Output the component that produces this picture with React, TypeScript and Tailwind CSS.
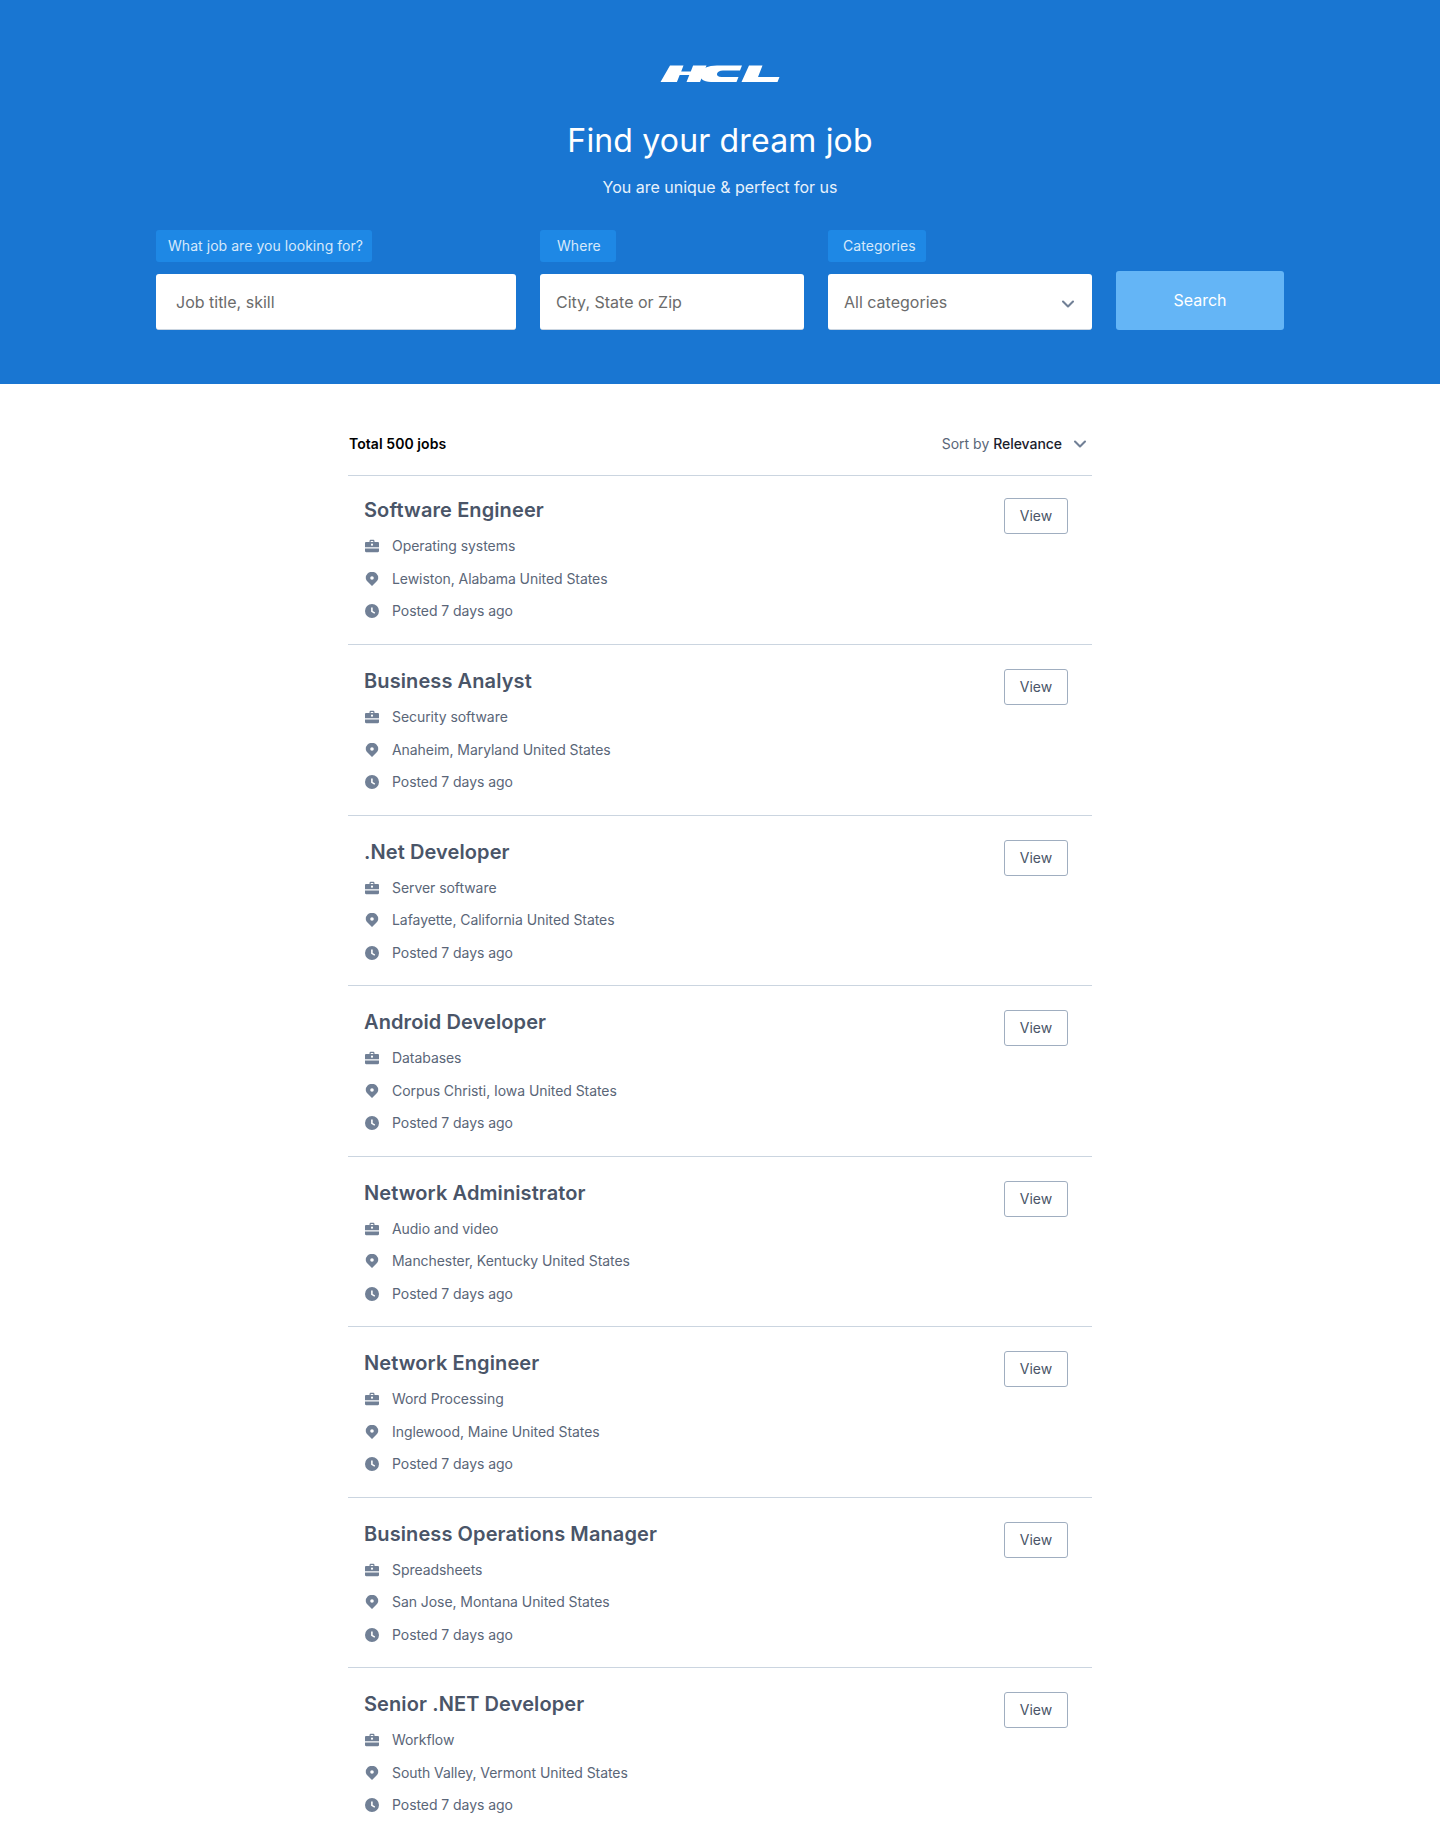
import { ChevronDown } from "lucide-react";

const jobs = [
  { title: "Software Engineer", category: "Operating systems", place: "Lewiston, Alabama United States" },
  { title: "Business Analyst", category: "Security software", place: "Anaheim, Maryland United States" },
  { title: ".Net Developer", category: "Server software", place: "Lafayette, California United States" },
  { title: "Android Developer", category: "Databases", place: "Corpus Christi, Iowa United States" },
  { title: "Network Administrator", category: "Audio and video", place: "Manchester, Kentucky United States" },
  { title: "Network Engineer", category: "Word Processing", place: "Inglewood, Maine United States" },
  { title: "Business Operations Manager", category: "Spreadsheets", place: "San Jose, Montana United States" },
  { title: "Senior .NET Developer", category: "Workflow", place: "South Valley, Vermont United States" },
];

const Logo = () => (
  <svg width="120" height="18" viewBox="0 0 120 18" fill="#fff">
    <path d="M10 .5h13.500l-2.300 6h9.600l2.300-6H46.500L40 17H26.500l2.800-7h-9.600l-2.800 7H.5z" />
    <path d="M57 .5h25l-2 5H63c-3.500 0-5.500 1.300-6 3.300-.4 2 1.200 3.200 4.500 3.200h17l-2 5H51c-8 0-12-3.400-10.500-8.700C42 3.500 48 .5 57 .5z" />
    <path d="M89 .5h13.500L98 12h21.500l-2 5H81.500z" />
  </svg>
);

const BagIcon = () => (
  <svg width="14" height="14" viewBox="0 0 14 14" fill="#718096" className="shrink-0">
    <path
      fillRule="evenodd"
      d="M4.500 2.200C4.500 1.300 5.200.8 6 .8h2c.8 0 1.500.5 1.500 1.400V3H12.800c.7 0 1.200.5 1.200 1.200V8.200H0V4.200C0 3.500.5 3 1.200 3h3.300zm1.200.8h2.600v-.6c0-.2-.1-.4-.4-.4H6.100c-.3 0-.4.2-.4.400zM7 6.800a1.100 1.100 0 1 0 0-2.200 1.100 1.100 0 0 0 0 2.200z"
    />
    <path d="M0 9.400h14V12c0 .7-.5 1.200-1.200 1.200H1.200C.5 13.200 0 12.700 0 12z" />
  </svg>
);

const PinIcon = () => (
  <svg width="14" height="14" viewBox="0 0 14 14" fill="#718096" className="shrink-0">
    <path
      fillRule="evenodd"
      d="M7 14 2.500 9.500C1.400 8.400.8 7.200.8 6a6.200 6.200 0 1 1 12.400 0c0 1.200-.6 2.400-1.700 3.500zM7 7.800a1.800 1.800 0 1 0 0-3.600 1.800 1.800 0 0 0 0 3.600z"
    />
  </svg>
);

const ClockIcon = () => (
  <svg width="14" height="14" viewBox="0 0 14 14" fill="#718096" className="shrink-0">
    <path
      fillRule="evenodd"
      d="M7 14A7 7 0 1 1 7 0a7 7 0 0 1 0 14zm-.9-10.500v4.200l3.300 2 .8-1.300-2.500-1.500V3.500z"
    />
  </svg>
);

const Field = ({ label, width, labelClass, children }: { label: string; width: string; labelClass: string; children: React.ReactNode }) => (
  <div className={`flex flex-col items-start gap-3 ${width}`}>
    <span className={`h-8 flex items-center rounded-[3px] bg-[#1e88e5] text-sm leading-none tracking-[0.05px] text-[#d6e9fb] ${labelClass}`}>{label}</span>
    {children}
  </div>
);

const JobRow = ({ title, category, place }: { title: string; category: string; place: string }) => (
  <div className="h-[170.5px] first:h-[169px] border-t border-[#cbd5e0] pl-4 pr-6 pt-[22px] first:pt-[20px] flex justify-between items-start">
    <div>
      <h2 className="text-xl leading-[28px] font-semibold tracking-[0.1px] text-[#4a5568]">{title}</h2>
      <ul className="mt-[6px] flex flex-col text-sm leading-[32.500px] tracking-[-0.06px] text-[#5a6678]">
        <li className="flex items-center gap-[13px] pl-[1px]"><BagIcon />{category}</li>
        <li className="flex items-center gap-[13px] pl-[1px]"><PinIcon />{place}</li>
        <li className="flex items-center gap-[13px] pl-[1px]"><ClockIcon />Posted 7 days ago</li>
      </ul>
    </div>
    <button className="mt-[2px] h-9 w-16 rounded-[3px] border border-[#a0aec0] bg-white text-sm text-[#4a5568]">View</button>
  </div>
);

export default function App() {
  return (
    <div className="h-[1829px] overflow-hidden bg-white font-['Inter',sans-serif]">
      <header className="h-[384px] bg-[#1976d2] pt-[65px] flex flex-col items-center">
        <Logo />
        <h1 className="mt-[38px] text-[32px] leading-[40px] tracking-[0.16px] text-white">Find your dream job</h1>
        <p className="mt-[14px] text-base leading-6 text-[#e8f2fc]">You are unique &amp; perfect for us</p>
        <div className="mt-[31px] flex items-end gap-6">
          <Field label="What job are you looking for?" width="w-[360px]" labelClass="pl-3 pr-[9px]">
            <input placeholder="Job title, skill" className="h-[56px] w-full rounded-[3px] border-b border-[#cbd5e0] bg-white px-5 text-base text-[#555] outline-none placeholder:text-[#6b6b6b]" />
          </Field>
          <Field label="Where" width="w-[264px]" labelClass="pl-[17px] pr-[15px]">
            <input placeholder="City, State or Zip" className="h-[56px] w-full rounded-[3px] border-b border-[#cbd5e0] bg-white px-4 text-base text-[#555] outline-none placeholder:text-[#6b6b6b]" />
          </Field>
          <Field label="Categories" width="w-[264px]" labelClass="pl-[15px] pr-[10px]">
            <div className="h-[56px] w-full rounded-[3px] border-b border-[#cbd5e0] bg-white pl-4 pr-[14px] flex items-center justify-between text-base text-[#6b6b6b]">
              All categories
              <ChevronDown size={20} strokeWidth={2.500} className="text-[#718096] mt-[5px]" />
            </div>
          </Field>
          <button className="h-[59px] w-[168px] rounded-[3px] bg-[#64b5f6] text-base text-white pb-[2px]">Search</button>
        </div>
      </header>
      <main className="w-[744px] ml-[348px]">
        <div className="h-[91px] flex items-center justify-between pl-[1px] pr-[2px] pt-[29px]">
          <span className="text-sm font-semibold tracking-[0.06px] text-black">Total 500 jobs</span>
          <span className="flex items-center text-sm text-[#5a6678]">
            Sort by&nbsp;<span className="font-medium tracking-[-0.05px] text-[#1a202c]">Relevance</span>
            <ChevronDown size={20} strokeWidth={2.500} className="ml-[8px] text-[#718096]" />
          </span>
        </div>
        <div>
          {jobs.map((job) => (
            <JobRow key={job.title} {...job} />
          ))}
        </div>
      </main>
    </div>
  );
}
